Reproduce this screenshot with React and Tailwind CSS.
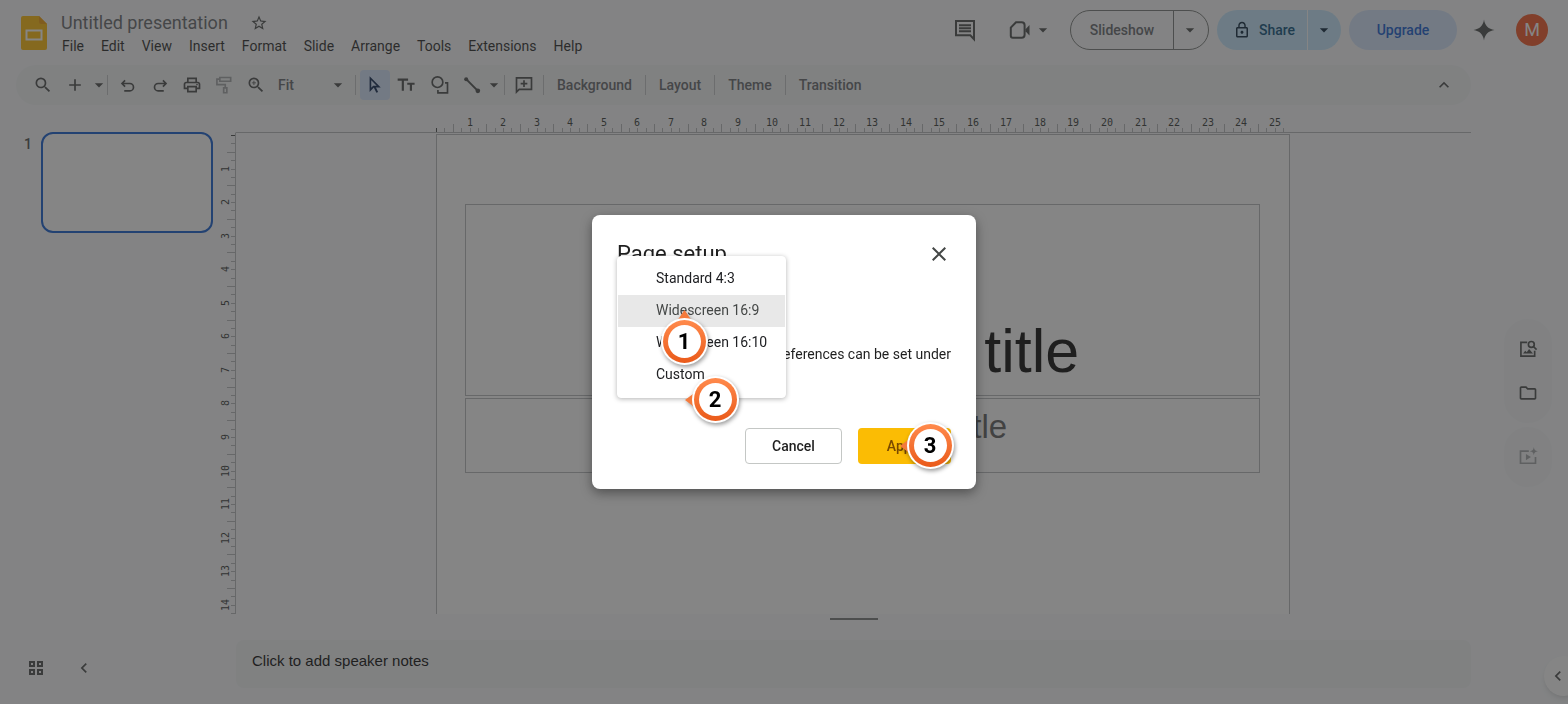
import clsx from "clsx";
import {
  MdAdd,
  MdArrowDropDown,
  MdChevronLeft,
  MdClose,
  MdKeyboardArrowUp,
  MdLockOutline,
  MdOutlineFolder,
  MdOutlinePrint,
  MdSearch,
  MdStarBorder,
  MdZoomIn,
} from "react-icons/md";

const CM = 33.55; // one centimetre on the ruler at the "Fit" zoom level

const MENUS = ["File", "Edit", "View", "Insert", "Format", "Slide", "Arrange", "Tools", "Extensions", "Help"];
const SIZES = ["Standard 4:3", "Widescreen 16:9", "Widescreen 16:10", "Custom"];

function Icon({ size = 20, className, children }) {
  return (
    <svg width={size} height={size} viewBox="0 0 24 24" fill="none" stroke="currentColor" strokeWidth="2" className={clsx("shrink-0", className)}>
      {children}
    </svg>
  );
}

const UndoIcon = ({ className }) => (
  <Icon size={20} className={className}>
    <path d="M8.5 6.5 4.8 10.2l3.7 3.7M5 10.200h9.2a4.4 4.4 0 0 1 0 8.8H7.5" />
  </Icon>
);

const RollerIcon = () => (
  <Icon size={20}>
    <path d="M7 3h13v4.5H7zM7 5H3.5v6.5h10V15" />
    <path d="M11.6 15.5h3.8v5.8h-3.8z" />
  </Icon>
);

const CursorIcon = () => (
  <Icon size={20}>
    <path d="M6.5 3.8v14l3.7-3.9h6.3z" />
    <path d="m11.3 14 3.4 6.8" strokeWidth="2.4" />
  </Icon>
);

const TextIcon = () => (
  <Icon size={20}>
    <path d="M2 5.5h12.5M8.2 5.5V19M13.5 10.5h8.8M17.9 10.5V19" strokeWidth="2.6" />
  </Icon>
);

const ShapeIcon = () => (
  <Icon size={20}>
    <circle cx="9" cy="8.6" r="6.4" />
    <path d="M18 9.5h3v12H9.5V18" />
  </Icon>
);

const LineIcon = () => (
  <Icon size={20}>
    <path d="m5 5 14 14" strokeWidth="2.4" />
    <circle cx="5" cy="5" r="2.4" fill="currentColor" stroke="none" />
    <circle cx="19" cy="19" r="2.8" fill="currentColor" stroke="none" />
  </Icon>
);

const AddCommentIcon = () => (
  <Icon size={20}>
    <path d="M3 20.5V3.5h18v13.8H6.2zM12 6.3v8M8 10.3h8" />
  </Icon>
);

const CommentsIcon = () => (
  <Icon size={24}>
    <path d="M3 3h18v18.2L17.3 17.3H3z" />
    <path d="M6 7.2h12M6 10.2h12M6 13.2h12" />
  </Icon>
);

const MeetIcon = () => (
  <Icon size={24}>
    <path d="M9 4.2h5.600a3 3 0 0 1 3 3v9.600a3 3 0 0 1-3 3H5.800a2 2 0 0 1-2-2V9.600z" />
    <path d="M18.500 11.200 22.500 7v10.500l-4-4.200z" fill="currentColor" stroke="none" />
  </Icon>
);

const SparkIcon = () => (
  <Icon size={24}>
    <path d="M12 1.500C12.800 7.500 16.500 11.200 22.500 12 16.500 12.800 12.800 16.500 12 22.500 11.200 16.500 7.500 12.800 1.500 12 7.500 11.200 11.200 7.500 12 1.500z" fill="currentColor" stroke="none" />
  </Icon>
);

const ImageSearchIcon = () => (
  <Icon size={20}>
    <path d="M11 4H3.500v16.500H20V14" />
    <path d="m6 17.500 2.700-3.300 1.800 1.800 2.800-4 4.700 5.500z" fill="currentColor" stroke="none" />
    <circle cx="16" cy="6.500" r="3.500" />
    <path d="m18.500 9 3.800 3.800" />
  </Icon>
);

const VideoSparkIcon = () => (
  <Icon size={20}>
    <path d="M13 5H3v14.500h18V12" />
    <path d="M9.500 8.300v7.600l6-3.800z" fill="currentColor" stroke="none" />
    <path d="M19 0c.5 3.500 1.500 4.500 5 5-3.500.5-4.500 1.500-5 5-.5-3.500-1.500-4.500-5-5 3.500-.5 4.500-1.500 5-5z" fill="currentColor" stroke="none" />
  </Icon>
);

const GridIcon = () => (
  <svg width="16" height="16" viewBox="0 0 16 16" fill="none" stroke="currentColor" strokeWidth="2">
    <path d="M2 2h4v4H2zM10 2h4v4h-4zM2 10h4v4H2zM10 10h4v4h-4z" />
  </svg>
);

const SlidesLogo = () => (
  <svg width="26" height="36" viewBox="0 0 26 36">
    <path d="M2 0h16l8 8v24a2 2 0 0 1-2 2H2a2 2 0 0 1-2-2V2a2 2 0 0 1 2-2z" fill="#ffba00" />
    <path d="M18 0v6a2 2 0 0 0 2 2h6z" fill="#f29900" />
    <rect x="5.500" y="14.500" width="15" height="9" fill="none" stroke="#fff" strokeWidth="2" />
  </svg>
);

function Ruler({ count, length, vertical }) {
  const ticks = [];
  for (let i = 0; i * (CM / 4) <= length; i++) ticks.push(i);

  return (
    <svg
      width={vertical ? 16 : length}
      height={vertical ? length : 16}
      className="shrink-0 overflow-visible"
      shapeRendering="crispEdges"
    >
      {ticks.map((i) => {
        const pos = Math.round(i * (CM / 4)) + 0.5;
        const size = i % 4 === 2 ? 8 : 4;
        const line = vertical
          ? { x1: 16 - size, x2: 16, y1: pos, y2: pos }
          : { x1: pos, x2: pos, y1: 16 - size, y2: 16 };
        return <line key={i} {...line} stroke={i === 0 ? "#444746" : "#b4b7ba"} />;
      })}
      {Array.from({ length: count }, (_, n) => {
        const pos = Math.round((n + 1) * CM);
        return (
          <text
            key={n}
            textAnchor="middle"
            transform={vertical ? `translate(10 ${pos}) rotate(-90)` : `translate(${pos} 10)`}
            className="fill-[#303331] font-['DejaVu_Sans_Mono',monospace] text-[10px]"
          >
            {n + 1}
          </text>
        );
      })}
    </svg>
  );
}

function Tool({ label, className, children }) {
  return (
    <button type="button" aria-label={label} className={clsx("flex h-[30px] shrink-0 items-center justify-center rounded-sm", className)}>
      {children}
    </button>
  );
}

const Divider = () => <span className="h-5 w-px shrink-0 bg-[#c0c3c6]" />;

function Header() {
  return (
    <header className="flex h-[65px] items-start justify-between pr-5 pl-[21px]">
      <div className="flex">
        <div className="pt-4">
          <SlidesLogo />
        </div>
        <div className="pt-3 pl-2">
          <div className="flex h-[22px] items-center pl-[6px]">
            <input
              aria-label="Document title"
              defaultValue="Untitled presentation"
              className="w-[189px] bg-transparent text-lg leading-[22px] text-[#5f6368] outline-none"
            />
            <button type="button" aria-label="Star">
              <MdStarBorder className="size-[18px]" />
            </button>
          </div>
          <nav className="flex gap-[17px] pl-[7px]">
            {MENUS.map((name) => (
              <button key={name} type="button" className="text-sm leading-6 text-[#1f1f1f]">
                {name}
              </button>
            ))}
          </nav>
        </div>
      </div>

      <div className="flex h-10 items-center pt-5">
        <button type="button" aria-label="Comments" className="mr-[30px]">
          <CommentsIcon />
        </button>
        <button type="button" aria-label="Join a call" className="mr-[17px] flex items-center gap-[2px]">
          <MeetIcon />
          <MdArrowDropDown className="size-5" />
        </button>
        <div className="mr-2 flex h-10 shrink-0 items-center rounded-full border border-[#747775] pr-[2px] text-[#5f6368]">
          <button type="button" className="h-full w-[103px] border-r border-[#747775] text-sm font-medium">
            Slideshow
          </button>
          <button type="button" aria-label="Slideshow options" className="flex w-8 justify-center text-[#444746]">
            <MdArrowDropDown className="size-5" />
          </button>
        </div>
        <div className="mr-2 flex h-10 shrink-0 items-center rounded-full bg-[#c2e7ff] pr-[1px] text-[#004a77]">
          <button type="button" className="flex h-full w-[91px] items-center justify-center gap-2 border-r border-white pl-1 text-sm font-medium">
            <MdLockOutline className="size-[18px] text-[#001d35]" />
            Share
          </button>
          <button type="button" aria-label="Share options" className="flex w-8 justify-center text-[#001d35]">
            <MdArrowDropDown className="size-5" />
          </button>
        </div>
        <button type="button" className="mr-[15px] h-10 w-[108px] rounded-full bg-[#d3e3fd] text-sm font-medium text-[#0b57d0]">
          Upgrade
        </button>
        <button type="button" aria-label="Ask Gemini" className="mr-5">
          <SparkIcon />
        </button>
        <button type="button" aria-label="Account" className="size-8 rounded-full bg-[#f4511e] text-lg text-white">
          M
        </button>
      </div>
    </header>
  );
}

function Toolbar() {
  return (
    <div className="mr-[97px] ml-4 flex h-10 items-center rounded-full bg-[#f2f4f6] pr-[17px] pl-[11px]">
      <Tool label="Search the menus" className="w-8"><MdSearch className="size-5" /></Tool>
      <Tool label="New slide" className="w-8"><MdAdd className="size-5" /></Tool>
      <Tool label="New slide with layout" className="w-4"><MdArrowDropDown className="size-5 shrink-0" /></Tool>
      <Divider />
      <Tool label="Undo" className="ml-1 w-8"><UndoIcon /></Tool>
      <Tool label="Redo" className="w-8"><UndoIcon className="-scale-x-100" /></Tool>
      <Tool label="Print" className="w-8"><MdOutlinePrint className="size-5" /></Tool>
      <Tool label="Paint format" className="w-8 text-[#a0a3a6]"><RollerIcon /></Tool>
      <Tool label="Zoom in" className="w-8"><MdZoomIn className="size-5" /></Tool>
      <input aria-label="Zoom" defaultValue="Fit" className="ml-[6px] w-[50px] bg-transparent text-sm font-medium text-[#5f6368] outline-none" />
      <Tool label="Zoom options" className="w-5"><MdArrowDropDown className="size-5" /></Tool>
      <span className="w-[7px]" />
      <Divider />
      <Tool label="Select" className="ml-1 w-[30px] bg-[#d3e3fd] text-[#041e49]"><CursorIcon /></Tool>
      <Tool label="Text box" className="w-8"><TextIcon /></Tool>
      <Tool label="Shape" className="ml-[2px] w-8"><ShapeIcon /></Tool>
      <Tool label="Line" className="w-8"><LineIcon /></Tool>
      <Tool label="Line options" className="mr-1 w-3"><MdArrowDropDown className="size-5 shrink-0" /></Tool>
      <Divider />
      <Tool label="Add comment" className="mx-[3px] w-8"><AddCommentIcon /></Tool>
      <Divider />
      {["Background", "Layout", "Theme", "Transition"].map((name, i) => (
        <div key={name} className="flex items-center">
          {i > 0 && <Divider />}
          <button type="button" className="px-[13px] text-sm font-medium text-[#5f6368]">{name}</button>
        </div>
      ))}
      <Tool label="Hide the menus" className="ml-auto w-5"><MdKeyboardArrowUp className="size-5" /></Tool>
    </div>
  );
}

function Workspace() {
  return (
    <div className="flex min-h-0 flex-1 pr-[97px]">
      <aside className="flex w-[219px] shrink-0 flex-col justify-between pt-[27px]">
        <div className="flex gap-[9px] pl-6">
          <span className="w-2 pt-[2px] text-sm font-medium">1</span>
          <button type="button" aria-label="Slide 1" className="h-[101px] w-[172px] rounded-xl border-2 border-[#0b57d0] bg-white" />
        </div>
        <div className="flex items-center gap-[30px] pb-[26px] pl-7">
          <button type="button" aria-label="Grid view"><GridIcon /></button>
          <button type="button" aria-label="Hide filmstrip"><MdChevronLeft className="size-5" /></button>
        </div>
      </aside>

      <div className="flex min-w-0 flex-1 flex-col">
        <div className="ml-4 flex h-7 shrink-0 items-end justify-center border-b border-l border-[#b4b7ba] border-l-transparent pl-[18px]">
          <Ruler count={25} length={854} />
        </div>
        <div className="flex min-h-0 flex-1">
          <div className="shrink-0 overflow-hidden border-r border-[#b4b7ba] pt-[2px]">
            <Ruler count={14} length={852} vertical />
          </div>
          <main className="flex flex-1 justify-center overflow-hidden pt-px pl-[18px]">
            <section className="h-[481px] w-[854px] shrink-0 border border-[#b4b7ba] bg-white px-7 pt-[69px] text-center font-['Liberation_Sans',Arial,sans-serif]">
              <div className="flex h-48 w-[795px] items-end justify-center border border-[#b4b7ba] pb-[9px] pl-1 text-[61px] leading-[70px] text-black">
                Click to add title
              </div>
              <div className="mt-[2px] h-[75px] w-[795px] border border-[#b4b7ba] pt-2 pl-1 text-[33px] leading-10 text-[#595959]">
                Click to add subtitle
              </div>
            </section>
          </main>
        </div>
        <div className="flex h-[26px] shrink-0 justify-center pt-1 pl-[17px]">
          <span className="h-[2px] w-12 bg-[#747775]" />
        </div>
        <textarea
          aria-label="Speaker notes"
          placeholder="Click to add speaker notes"
          className="mb-4 ml-[17px] h-12 shrink-0 resize-none rounded-lg bg-[#f2f4f6] px-4 py-3 font-['Liberation_Sans',Arial,sans-serif] text-[15px] leading-[18px] outline-none placeholder:text-black"
        />
      </div>
    </div>
  );
}

// Numbered callout with a small arrow pointing up or left.
function Step({ n, point, className }) {
  return (
    <div className={clsx("absolute flex size-12 items-center justify-center", className)}>
      <svg width="48" height="48" viewBox="0 0 48 48" className="absolute inset-0 overflow-visible drop-shadow-[1px_2px_2px_rgba(0,0,0,0.4)]">
        <defs>
          <linearGradient id={`ring-${n}`} x1="0" y1="0" x2="0" y2="1">
            <stop offset="0" stopColor="#ff8a4c" />
            <stop offset="1" stopColor="#ea5a1a" />
          </linearGradient>
        </defs>
        <path d={point === "up" ? "M24.500-8 32 3H17z" : "M-6 24 4 16.500V31.500z"} fill="#f47a3c" />
        <circle cx="24.500" cy="23.500" r="23.500" fill="#fff" />
        <circle cx="24.500" cy="23.500" r="21.500" fill={`url(#ring-${n})`} />
        <circle cx="24.500" cy="23.500" r="16.500" fill="#fff" />
      </svg>
      <span className="relative text-[22px] leading-6 font-bold text-black">{n}</span>
    </div>
  );
}

function PageSetup() {
  return (
    <div className="fixed inset-0 flex items-center justify-center bg-[#343434]/60">
      <div role="dialog" aria-labelledby="setup-title" className="relative h-[274px] w-96 rounded-lg bg-white px-[25px] pt-6 pb-[25px] shadow-[0_4px_12px_rgba(0,0,0,0.4)]">
        <div className="flex items-center justify-between">
          <h2 id="setup-title" className="text-[22px] leading-[30px] text-[#1f1f1f]">Page setup</h2>
          <button type="button" aria-label="Close" className="text-[#444746]">
            <MdClose className="size-6" />
          </button>
        </div>
        <p className="mt-[75px] flex justify-end text-sm leading-5 whitespace-nowrap text-[#1f1f1f]">
          Measurement unit preferences can be set under
        </p>
        <div className="mt-16 flex justify-end gap-4 text-sm font-medium">
          <button type="button" className="h-9 w-[97px] rounded border border-[#c4c7c5] text-[#1f1f1f]">Cancel</button>
          <button type="button" className="h-9 w-[93px] rounded bg-[#fbbc04] text-[#7a4a00]">Apply</button>
        </div>

        <ul role="listbox" aria-label="Page size" className="absolute top-[41px] left-[25px] w-[169px] rounded border border-white bg-white py-[6px] shadow-[0_1px_5px_rgba(0,0,0,0.3)]">
          {SIZES.map((size) => (
            <li
              key={size}
              role="option"
              aria-selected={size === "Widescreen 16:9"}
              className={clsx("pb-[2px] pl-[38px] text-sm leading-[30px] text-[#202124]", size === "Widescreen 16:9" && "bg-[#e8e8e8] text-[#444746]")}
            >
              {size}
            </li>
          ))}
        </ul>

        <Step n={1} point="up" className="top-[103px] left-[68px]" />
        <Step n={2} point="left" className="top-[161px] left-[99px]" />
        <Step n={3} point="left" className="top-[207px] left-[314px]" />
      </div>
    </div>
  );
}

export default function App() {
  return (
    <div className="relative flex h-screen flex-col overflow-hidden bg-[#f9fbfd] font-[Roboto,sans-serif] text-[#444746]">
      <Header />
      <Toolbar />
      <Workspace />

      {/* floating side rail */}
      <div className="absolute top-[319px] right-4 flex w-12 flex-col gap-1">
        <div className="flex h-[104px] flex-col items-center justify-center gap-6 rounded-full bg-[#f4f6f8]">
          <button type="button" aria-label="Image search"><ImageSearchIcon /></button>
          <button type="button" aria-label="Templates"><MdOutlineFolder className="size-5" /></button>
        </div>
        <div className="flex h-[60px] items-center justify-center rounded-full bg-[#f4f6f8] text-[#a0a3a6]">
          <button type="button" aria-label="Create video"><VideoSparkIcon /></button>
        </div>
      </div>
      <button type="button" aria-label="Show side panel" className="absolute -right-4 bottom-2 flex size-10 items-center rounded-full bg-white pl-1 shadow-md">
        <MdChevronLeft className="size-5" />
      </button>

      <PageSetup />
    </div>
  );
}
